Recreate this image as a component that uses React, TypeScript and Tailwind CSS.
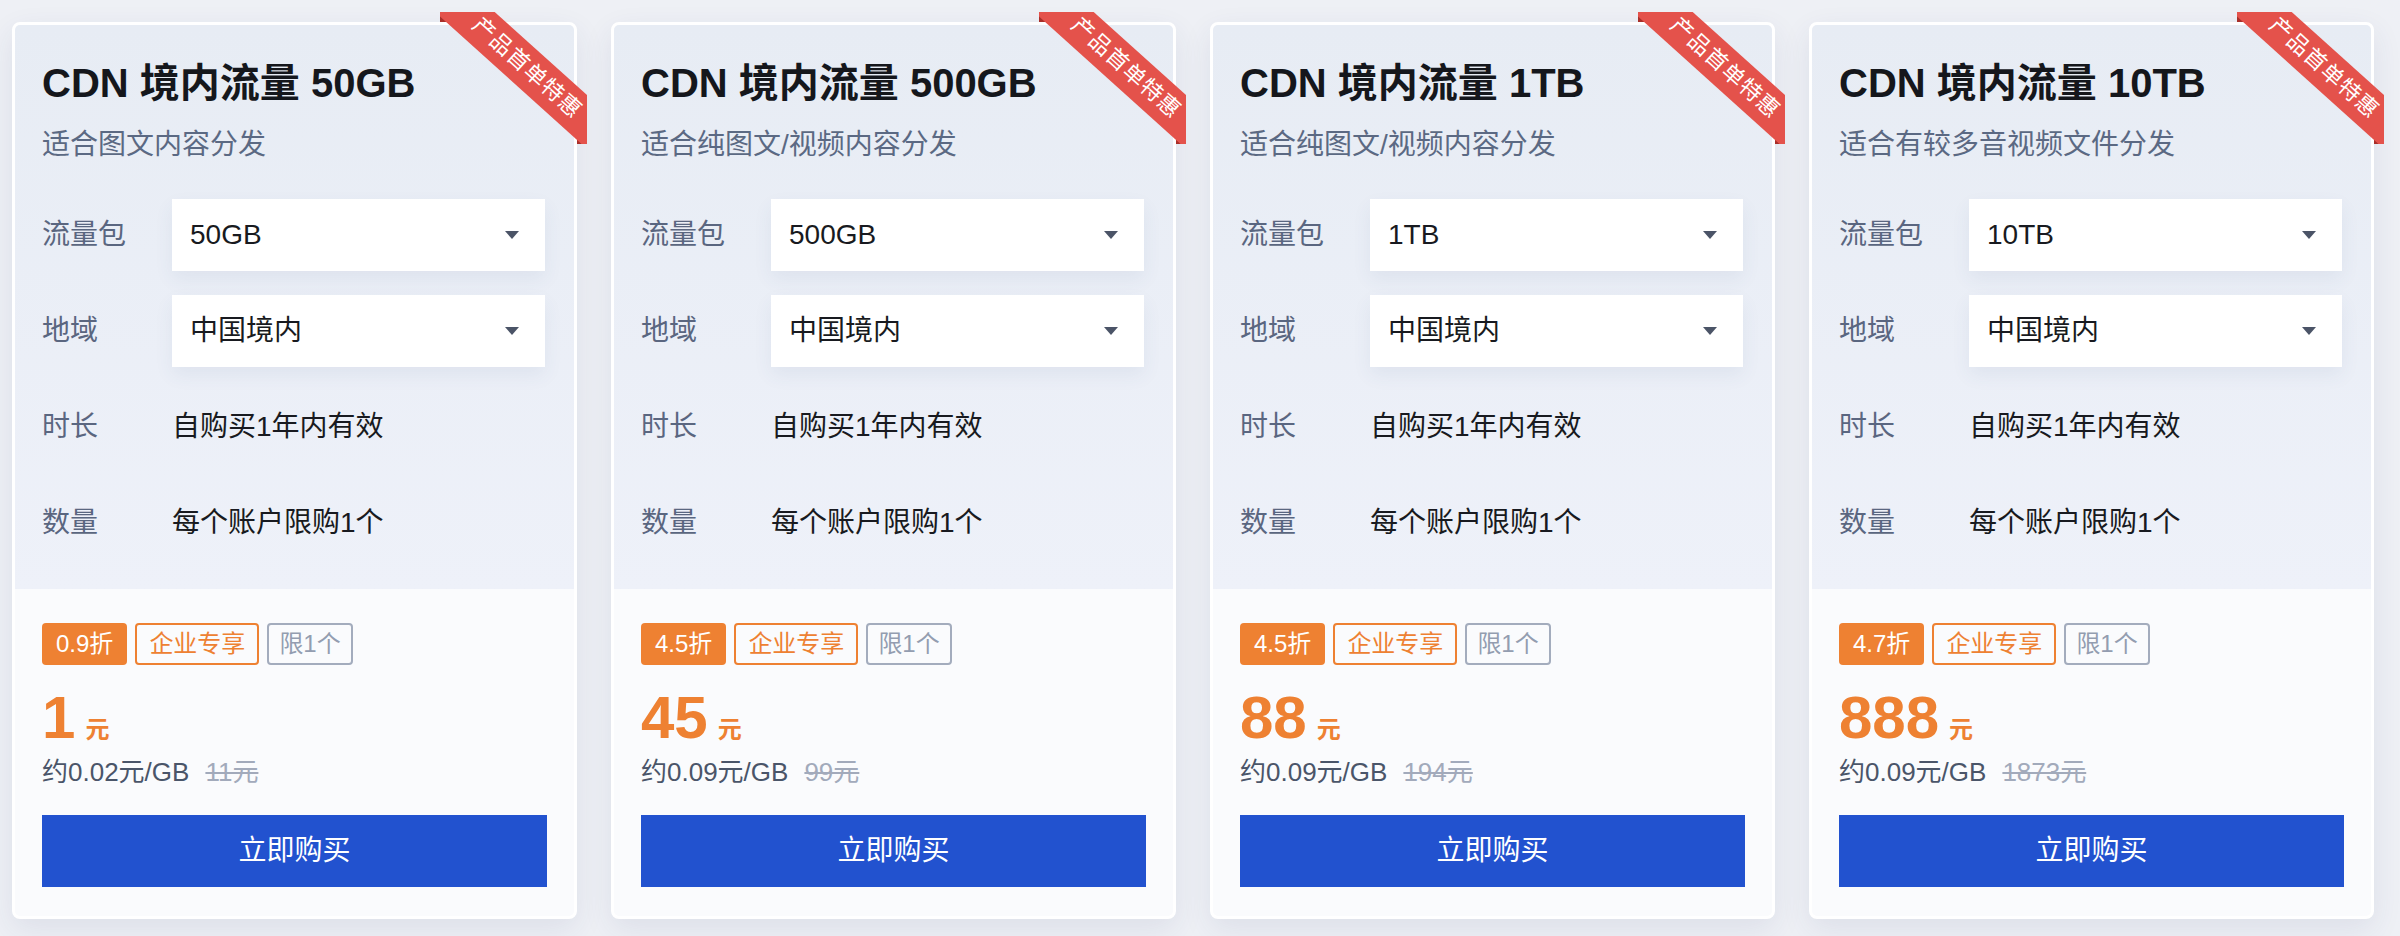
import React from "react";

type Plan = {
  name: string;
  desc: string;
  pkg: string;
  discount: string;
  price: string;
  unit: string;
  orig: string;
};

const plans: Plan[] = [
  { name: "CDN 境内流量 50GB", desc: "适合图文内容分发", pkg: "50GB", discount: "0.9折", price: "1", unit: "约0.02元/GB", orig: "11元" },
  { name: "CDN 境内流量 500GB", desc: "适合纯图文/视频内容分发", pkg: "500GB", discount: "4.5折", price: "45", unit: "约0.09元/GB", orig: "99元" },
  { name: "CDN 境内流量 1TB", desc: "适合纯图文/视频内容分发", pkg: "1TB", discount: "4.5折", price: "88", unit: "约0.09元/GB", orig: "194元" },
  { name: "CDN 境内流量 10TB", desc: "适合有较多音视频文件分发", pkg: "10TB", discount: "4.7折", price: "888", unit: "约0.09元/GB", orig: "1873元" },
];

function Caret() {
  return (
    <svg width="14" height="8" viewBox="0 0 14 8" className="shrink-0">
      <path d="M0 0h14L7 8z" fill="#4b5467" />
    </svg>
  );
}

function Ribbon() {
  return (
    <div className="pointer-events-none absolute right-[-13px] top-[-13px] z-10 h-[132px] w-[147px] overflow-hidden">
      <div className="absolute left-0 top-0 h-[10px] w-[10px] bg-[#a82f29]" />
      <div className="absolute bottom-0 right-0 h-[10px] w-[10px] bg-[#a82f29]" />
      <div className="absolute left-[-33px] top-[36px] flex h-[40px] w-[240px] rotate-[42deg] items-center justify-center bg-[#e4524b] text-[22px] leading-none tracking-[1px] text-white">
        产品首单特惠
      </div>
    </div>
  );
}

function Row({ label, children }: { label: string; children: React.ReactNode }) {
  return (
    <div className="flex h-[72px] items-center">
      <span className="w-[130px] shrink-0 text-[28px] text-[#5a6680]">{label}</span>
      {children}
    </div>
  );
}

function Select({ value }: { value: string }) {
  return (
    <div className="flex h-[72px] w-[373px] items-center justify-between bg-white pl-[18px] pr-[26px] text-[28px] text-[#181a20] shadow-[0_8px_18px_rgba(60,80,130,0.07)]">
      <span>{value}</span>
      <Caret />
    </div>
  );
}

function PlanCard({ plan }: { plan: Plan }) {
  return (
    <div className="relative w-[565px] shrink-0 rounded-[8px] border-[3px] border-white bg-[#fafbfd] shadow-[0_10px_30px_rgba(40,60,110,0.09)]">
      <Ribbon />
      <div className="rounded-t-[5px] bg-gradient-to-b from-[#e7ecf4] to-[#eef1f9] px-[27px] pb-[30px] pt-[34px]">
        <h3 className="text-[40px] font-semibold leading-[48px] text-[#15171c]">{plan.name}</h3>
        <p className="mt-[18px] text-[28px] leading-[40px] text-[#5b6983]">{plan.desc}</p>
        <div className="mt-[34px] flex flex-col gap-[24px]">
          <Row label="流量包">
            <Select value={plan.pkg} />
          </Row>
          <Row label="地域">
            <Select value="中国境内" />
          </Row>
          <Row label="时长">
            <span className="text-[28px] text-[#181a20]">自购买1年内有效</span>
          </Row>
          <Row label="数量">
            <span className="text-[28px] text-[#181a20]">每个账户限购1个</span>
          </Row>
        </div>
      </div>
      <div className="px-[27px] pb-[29px] pt-[34px]">
        <div className="flex gap-[8px] text-[24px] leading-none">
          <span className="flex h-[42px] items-center rounded-[4px] bg-[#ee8132] px-[14px] text-white">{plan.discount}</span>
          <span className="flex h-[42px] items-center rounded-[4px] border-2 border-[#ee8132] px-[12px] text-[#ee8132]">企业专享</span>
          <span className="flex h-[42px] items-center rounded-[4px] border-2 border-[#a3acbd] px-[10px] text-[#939db0]">限1个</span>
        </div>
        <div className="mt-[24px] flex items-baseline gap-[10px] font-bold text-[#ee8132]">
          <span className="text-[60px] leading-[58px]">{plan.price}</span>
          <span className="text-[24px]">元</span>
        </div>
        <div className="mt-[8px] flex items-center text-[26px] leading-[32px]">
          <span className="text-[#4a5569]">{plan.unit}</span>
          <span className="ml-[16px] text-[#a2aabb] line-through">{plan.orig}</span>
        </div>
        <button
          type="button"
          className="mt-[27px] flex h-[72px] w-full items-center justify-center bg-[#2252cf] text-[28px] text-white"
        >
          立即购买
        </button>
      </div>
    </div>
  );
}

export default function App() {
  return (
    <div className="h-[936px] w-[2400px] overflow-hidden bg-[#eef0f5] font-['Liberation_Sans','Noto_Sans_CJK_SC',sans-serif]">
      <div className="flex gap-[34px] pl-[12px] pt-[22px]">
        {plans.map((p) => (
          <PlanCard key={p.name} plan={p} />
        ))}
      </div>
    </div>
  );
}
